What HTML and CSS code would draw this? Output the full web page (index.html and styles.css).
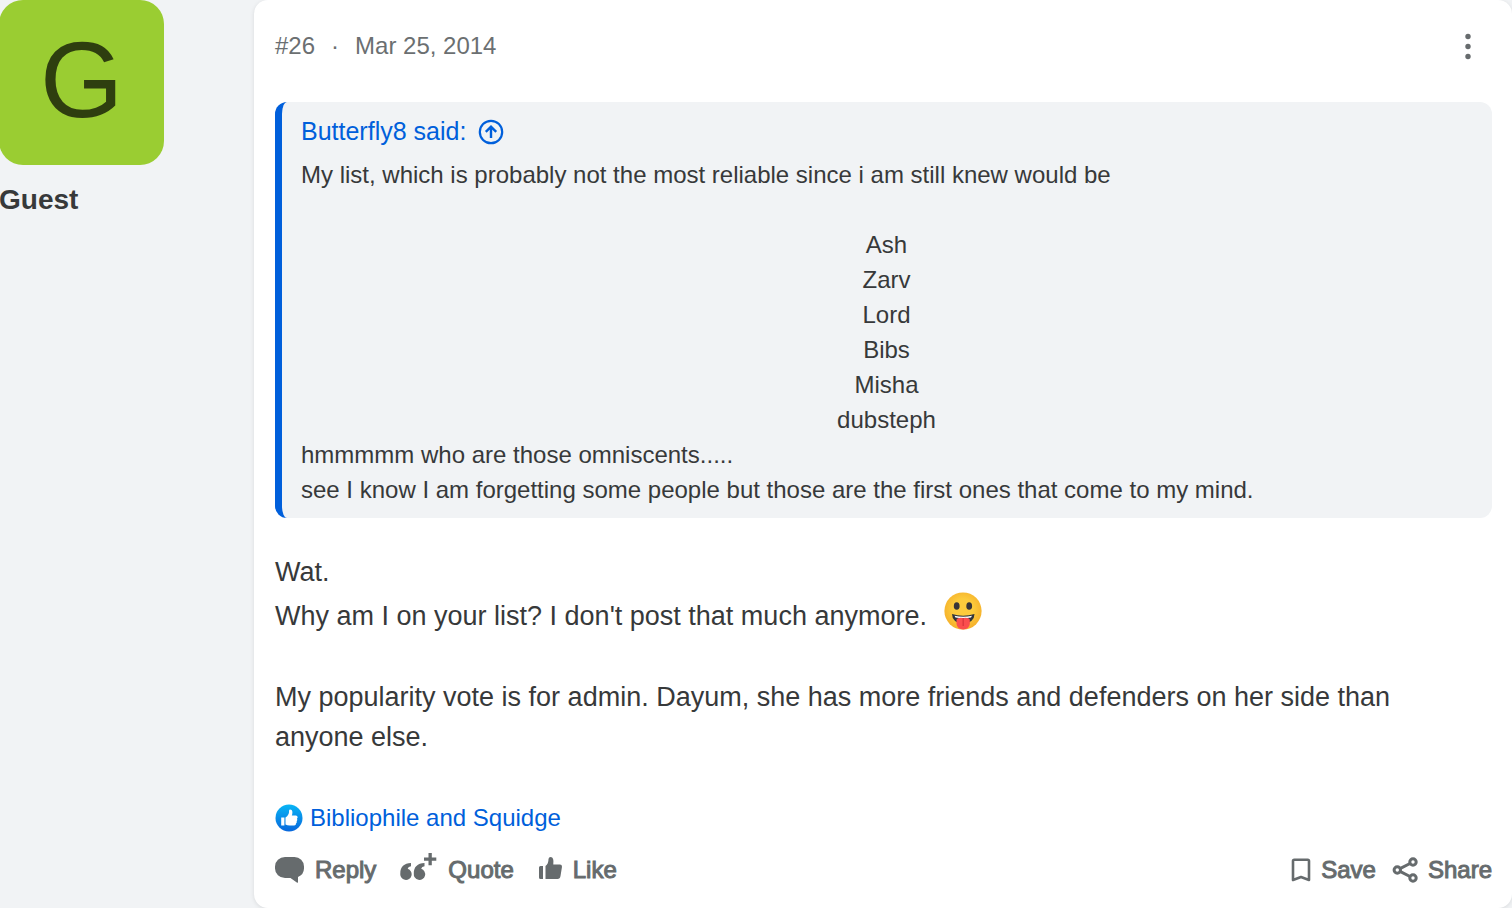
FILE: index.html
```html
<!DOCTYPE html>
<html lang="en">
<head>
<meta charset="utf-8">
<meta name="viewport" content="width=device-width, initial-scale=1">
<title>Post #26</title>
<link rel="stylesheet" href="styles.css">
</head>
<body>
<main class="thread">
  <aside class="author">
    <div class="avatar" aria-hidden="true">G</div>
    <h2 class="author-name">Guest</h2>
  </aside>
  <article class="post">
    <header class="post-header">
      <div class="post-meta"><span>#26</span><span>·</span><time datetime="2014-03-25">Mar 25, 2014</time></div>
      <button class="menu-button" type="button" aria-label="More options">
        <svg width="8" height="28" viewBox="0 0 8 28" fill="currentColor"><circle cx="4" cy="4.500" r="2.700"/><circle cx="4" cy="14.500" r="2.700"/><circle cx="4" cy="24.500" r="2.700"/></svg>
      </button>
    </header>
    <blockquote class="quote">
      <a class="quote-source" href="#quoted">Butterfly8 said:
        <svg width="26" height="26" viewBox="0 0 26 26" fill="none" stroke="currentColor"><circle cx="13" cy="13" r="11.200" stroke-width="2.200"/><path d="M13 19V8M7.800 12.800 13 7.600l5.200 5.200" stroke-width="2.400"/></svg>
      </a>
      <p>My list, which is probably not the most reliable since i am still knew would be</p>
      <p class="names"><br>Ash<br>Zarv<br>Lord<br>Bibs<br>Misha<br>dubsteph</p>
      <p>hmmmmm who are those omniscents.....<br>see I know I am forgetting some people but those are the first ones that come to my mind.</p>
    </blockquote>
    <div class="message">
      <p>Wat.</p>
      <p class="emoji-line">Why am I on your list? I don't post that much anymore.
        <svg class="emoji" width="38" height="38" viewBox="0 0 38 38" role="img" aria-label="Stick out tongue">
          <defs><radialGradient id="face" cx=".5" cy=".45" r=".55"><stop offset=".5" stop-color="#fccb3c"/><stop offset="1" stop-color="#f5b02b"/></radialGradient></defs>
          <circle cx="19" cy="19" r="18.600" fill="url(#face)"/>
          <ellipse cx="12.700" cy="14" rx="2.900" ry="3.800" fill="#383538"/><ellipse cx="25.200" cy="14" rx="2.900" ry="3.800" fill="#383538"/>
          <path d="M8 22q11 3.500 22.500 0Q30.500 30 19 32.500 8 30 8 22Z" fill="#30343a"/>
          <path d="M10.500 23.700q8.700 2.300 17.500 0l-1 1.700q-7.800 1.500-15.500 0Z" fill="#fff"/>
          <path d="M12.500 27.500q1-2.200 6.700-1.500 5.800-.7 6.600 1.500v4.500q-.8 5.200-6.600 5.400-5.900-.2-6.700-5.400Z" fill="#fa4e4e"/><path d="M19.200 26v8" stroke="#d9363b" stroke-width="1.300"/>
        </svg>
      </p>
      <p class="paragraph">My popularity vote is for admin. Dayum, she has more friends and defenders on her side than anyone else.</p>
    </div>
    <a class="reactions" href="#reactions">
      <svg width="28" height="28" viewBox="0 0 28 28"><defs><linearGradient id="like" x2="0" y2="1"><stop stop-color="#08b5f5"/><stop offset="1" stop-color="#0867dc"/></linearGradient></defs><circle cx="14" cy="14" r="13.500" fill="url(#like)"/><path d="M6.200 13.600h3.200v8H6.200zM10.500 13.600q3.800-2.600 3.600-7.200 0-1 1-1c2.600 0 2.800 3.500 1.700 6.200h4q1.800.1 1.800 1.700 0 .8-.6 1.300.8 1.400-.3 2.700.5 1.500-.7 2.300.1 2-1.800 2h-4.500q-2.500 0-4.200-1Z" fill="#fff"/></svg>
      Bibliophile and Squidge
    </a>
    <footer class="actions">
      <div class="action-group">
        <button class="action" type="button"><svg width="30" height="26" viewBox="0 0 30 26" fill="currentColor"><path d="M10 0h9.500a9.500 9.500 0 0 1 9.500 9.500v2a9.500 9.500 0 0 1-6 8.500v5q0 1.300-1.200.5L15.500 21H10a10 9.500 0 0 1-10-9.500v-2A10 9.500 0 0 1 10 0Z"/></svg>Reply</button>
        <button class="action" type="button"><svg width="38" height="36" viewBox="0 0 38 36" fill="currentColor"><path id="mark" d="M.3 21.500C.2 15 4 11.200 11 11v3.300q-2.800.4-3.300 2.500a5.700 5.700 0 1 1-7.400 4.700Z"/><use href="#mark" x="13.500"/><path d="M28.500 1h3.300v4.500h4.500v3.200h-4.500v4.600h-3.300V8.700H24V5.500h4.500Z"/></svg>Quote</button>
        <button class="action" type="button"><svg width="25" height="26" viewBox="0 0 25 26" fill="currentColor"><path d="M2.500 9H5v13H2.500Q1 22 1 20.500v-10Q1 9 2.500 9ZM7.500 9q3-2 3-7Q10.700 0 12.700 0q3.500.4 2.600 7.500h6.700q2 0 2 2.200L22.500 19q-.4 3-3 3h-12Z"/></svg>Like</button>
      </div>
      <div class="action-group action-group-end">
        <button class="action" type="button"><svg width="20" height="24" viewBox="0 0 20 24" fill="none" stroke="currentColor" stroke-width="2.600" stroke-linejoin="round"><path d="M2 3q0-1.300 1.300-1.300h13.400Q18 1.700 18 3v19l-8-3-8 3Z"/></svg>Save</button>
        <button class="action" type="button"><svg width="26" height="26" viewBox="0 0 26 26" fill="none" stroke="currentColor"><circle cx="5.300" cy="13" r="3.200" stroke-width="3"/><circle cx="21" cy="5" r="3.200" stroke-width="3"/><circle cx="21" cy="21" r="3.200" stroke-width="3"/><path d="m8 11.600 10-5.100M8 14.400l10 5.100" stroke-width="3"/></svg>Share</button>
      </div>
    </footer>
  </article>
</main>
</body>
</html>
```

FILE: styles.css
```css
* { box-sizing: border-box; }
body { margin: 0; background: #f1f3f5; color: #37393a; font-family: "Liberation Sans", Arial, sans-serif; }
p, h2, blockquote { margin: 0; }
svg { flex: none; }
.thread { display: grid; grid-template-columns: 254px 1fr; min-height: 100vh; }
.avatar { display: flex; align-items: center; justify-content: center; width: 165px; height: 165px; margin-left: -1px; padding-bottom: 4px; border-radius: 24px; background: #9acd32; color: #2e3e0f; font-size: 107px; line-height: 1; }
.author-name { margin-left: -1px; margin-top: 17px; font-size: 28px; line-height: 36px; }
.post { display: flex; flex-direction: column; padding: 28px 20px 18px 21px; border-radius: 14px; background: #fff; box-shadow: 0 1px 4px #0000001a; }
.post-header { display: flex; align-items: center; justify-content: space-between; height: 36px; color: #6b6f71; font-size: 24px; }
.post-meta { display: flex; gap: 16px; }
button { border: 0; padding: 0; background: none; color: #666b6d; font: inherit; cursor: pointer; }
.menu-button { display: flex; width: 48px; justify-content: center; }
a { color: #005fdb; text-decoration: none; }
.quote { margin-top: 38px; padding: 12px 20px 11px 19px; border-left: 7px solid #005fdb; border-radius: 12px; background: #f1f3f5; font-size: 24px; line-height: 35px; }
.quote-source { display: flex; align-items: center; gap: 12px; width: fit-content; margin-bottom: 8px; font-size: 25px; }
.names { text-align: center; }
.message { margin-top: 34px; font-size: 27px; line-height: 40px; }
.emoji { margin-left: 10px; vertical-align: -5px; }
.emoji-line { line-height: 42px; }
.paragraph { margin-top: 40px; padding-right: 40px; }
.reactions { display: flex; align-items: center; gap: 7px; width: fit-content; margin-top: 43px; font-size: 24px; line-height: 35px; }
.actions { display: flex; align-items: center; justify-content: space-between; margin-top: 17px; font-size: 24px; line-height: 36px; }
.action-group { display: flex; gap: 24px; }
.action-group-end { gap: 16px; }
.action { display: flex; align-items: center; gap: 10px; -webkit-text-stroke: 1px currentColor; }
```
